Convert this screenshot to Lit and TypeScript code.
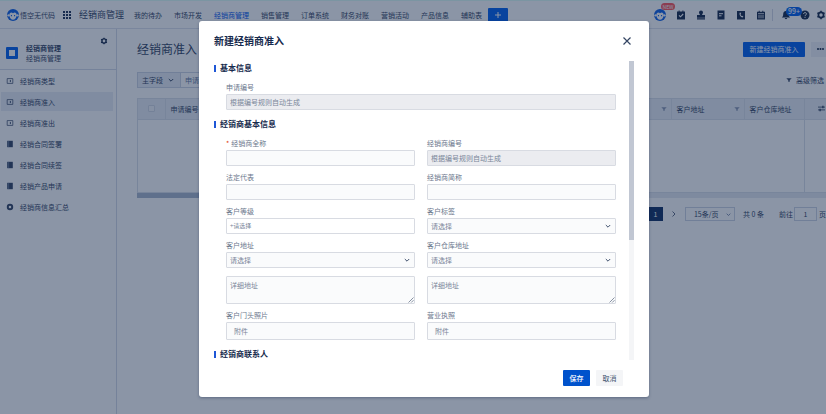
import { LitElement, html, css, svg, nothing } from "lit";
import { customElement } from "lit/decorators.js";
import { classMap } from "lit/directives/class-map.js";

const reset = css`
  * { box-sizing: border-box; }
  button, input, select, textarea {
    font: inherit; color: inherit; margin: 0; padding: 0;
    border: 0; border-radius: 0; background: none; min-width: 0; outline: none;
  }
  select, input { appearance: none; }
  button { display: inline-flex; align-items: center; justify-content: center; white-space: nowrap; }
  a { color: inherit; text-decoration: none; }
  svg { display: block; flex: none; }
`;

const chevron = (size = 6) => html`<svg class="chev" width=${size} height=${size} viewBox="0 0 6 6" fill="none" stroke="currentColor"><path d="M.8 2 3 4.2 5.2 2"/></svg>`;

type Kind = "text" | "auto" | "plus" | "select" | "file";
interface Field { id: string; label: string; kind: Kind; required?: boolean; detail?: boolean; }

const mainFields: Field[] = [
  { id: "fullname", label: "经销商全称", kind: "text", required: true },
  { id: "code", label: "经销商编号", kind: "auto" },
  { id: "legal", label: "法定代表", kind: "text" },
  { id: "short", label: "经销商简称", kind: "text" },
  { id: "level", label: "客户等级", kind: "plus" },
  { id: "tag", label: "客户标签", kind: "select" },
  { id: "address", label: "客户地址", kind: "select", detail: true },
  { id: "depot", label: "客户仓库地址", kind: "select", detail: true },
  { id: "photo", label: "客户门头照片", kind: "file" },
  { id: "licence", label: "营业执照", kind: "file" },
];

@customElement("dealer-dialog")
export class DealerDialog extends LitElement {
  static styles = [reset, css`
    :host {
      display: flex; flex-direction: column; width: 450px; max-width: 100%;
      background: #fff; border-radius: 3px; color: #6b778c;
      box-shadow: 0 1px 3px rgba(9, 30, 66, .35);
      font-size: 7px; line-height: 10px;
    }
    .head { display: flex; align-items: center; justify-content: space-between; height: 40px; padding: 0 17px 0 15px; }
    .title { margin: 0; font-size: 10px; line-height: 14px; font-weight: 700; color: #172b4d; }
    .close { width: 10px; height: 10px; color: #344563; }
    .body { display: flex; padding: 0 15px; height: calc(100vh - 115px); }
    .scroll { flex: 1; min-width: 0; overflow-y: auto; scrollbar-width: none; padding-right: 13px; }
    .rail { width: 5px; background: #f4f5f7; }
    .thumb { height: 60%; background: #c1c7d3; }
    .section { display: flex; align-items: center; gap: 4px; margin: 0; height: 14px; font-size: 8px; font-weight: 700; color: #172b4d; }
    .section::before { content: ""; width: 2px; height: 7px; background: #1f57d6; }
    .grid { display: grid; grid-template-columns: 1fr 1fr; gap: 6px 12px; padding: 7px 0 7px 12px; }
    .field { display: flex; flex-direction: column; gap: 2px; min-width: 0; }
    .wide { grid-column: 1 / -1; }
    .star { color: #de350b; margin-right: 2px; }
    .box {
      width: 100%; height: 16px; padding: 0 3px; border: 1px solid #d8dbe2;
      border-radius: 1px; background: #fafbfc; color: #7a8699; text-align: left;
    }
    .box::placeholder { color: #7a8699; opacity: 1; }
    .auto { background: #ebecf0; }
    .plus { display: flex; justify-content: flex-start; background: #fff; font-size: 6px; }
    .file { display: flex; justify-content: flex-start; height: 18px; padding: 0 7px; }
    .wrap { position: relative; }
    .wrap .chev { position: absolute; right: 5px; top: 5px; color: #42526e; pointer-events: none; }
    .select { display: block; }
    .area { display: block; height: 28px; padding: 3px; resize: none; }
    .more { margin-top: 6px; }
    .grip { position: absolute; right: 1px; bottom: 1px; color: #6b778c; pointer-events: none; }
    .foot { display: flex; justify-content: flex-end; gap: 6px; padding: 10px 26px 11px; }
    .btn { width: 27px; height: 16px; border-radius: 1px; background: #f4f5f7; color: #42526e; }
    .save { background: #0052cc; color: #fff; font-weight: 500; }
  `];

  private control(f: Field) {
    switch (f.kind) {
      case "text": return html`<input id=${f.id} class="box" type="text">`;
      case "auto": return html`<input id=${f.id} class="box auto" type="text" placeholder="根据编号规则自动生成" disabled>`;
      case "plus": return html`<button id=${f.id} class="box plus" type="button">+请选择</button>`;
      case "file": return html`<button id=${f.id} class="box file" type="button">附件</button>`;
      case "select": return html`<div class="wrap"><select id=${f.id} class="box select"><option>请选择</option></select>${chevron()}</div>`;
    }
  }

  private field(f: Field, wide = false) {
    return html`<div class=${classMap({ field: true, wide })}>
      <label for=${f.id}>${f.required ? html`<span class="star">*</span>` : nothing}${f.label}</label>
      ${this.control(f)}
      ${f.detail ? html`<div class="wrap more">
        <textarea class="box area" placeholder="详细地址" aria-label="详细地址"></textarea>
        <svg class="grip" width="6" height="6" viewBox="0 0 6 6" stroke="currentColor" stroke-width=".8"><path d="M.5 5.5l5-5M3.2 5.5l2.3-2.3"/></svg>
      </div>` : nothing}
    </div>`;
  }

  render() {
    return html`
      <header class="head">
        <h2 class="title">新建经销商准入</h2>
        <button class="close" aria-label="关闭"><svg width="10" height="10" viewBox="0 0 10 10" stroke="currentColor" stroke-width="1.2"><path d="M1.5 1.5l7 7M8.5 1.5l-7 7"/></svg></button>
      </header>
      <div class="body">
        <div class="scroll">
          <h3 class="section">基本信息</h3>
          <div class="grid">${this.field({ id: "apply", label: "申请编号", kind: "auto" }, true)}</div>
          <h3 class="section">经销商基本信息</h3>
          <div class="grid">${mainFields.map((f) => this.field(f))}</div>
          <h3 class="section">经销商联系人</h3>
        </div>
        <div class="rail"><div class="thumb"></div></div>
      </div>
      <footer class="foot">
        <button class="btn save">保存</button>
        <button class="btn">取消</button>
      </footer>`;
  }
}

const icon = (body: unknown, size = 10) => html`<svg width=${size} height=${size} viewBox="0 0 10 10" fill="currentColor">${body}</svg>`;

const glyph = {
  task: svg`<path d="M1 1.500h1.600V.5h1v1h2.800v-1h1v1H9V9.500H1z"/><path d="M3 5.300l1.500 1.500L7.200 4" fill="none" stroke="#fff" stroke-width="1.100"/>`,
  stamp: svg`<path d="M5 .5a2 2 0 0 1 2 2c0 1-.9 1.500-.9 2.600H9v2.600H1V5.100h2.900C3.900 4 3 3.500 3 2.500a2 2 0 0 1 2-2zM1 8.200h8v1.200H1z"/>`,
  note: svg`<path d="M1.500.5h7v9h-7z"/><path d="M3 3.700h4M3 5.800h2.500" stroke="#fff" stroke-width="1"/>`,
  phone: svg`<path d="M1 1h8v8.500H1z"/><path d="M3.600 2.700c-.6 1.800.9 4.300 3 4.900l.8-1-1.300-.9-.6.400c-.5-.4-.9-1-1-1.500l.6-.5-.5-1.500z" fill="#fff"/>`,
  calendar: svg`<path d="M1 1.800h1.700v-1h1v1h2.600v-1h1v1H9v7.700H1z"/><path d="M2 3.700h6M3 5v3.300M5 5v3.300M7 5v3.300" stroke="#fff" stroke-width=".8"/>`,
  bell: svg`<path d="M5 1c2 0 2.800 1.500 2.800 3.200 0 1.600.5 2.500 1.400 3.200H.8c.9-.7 1.400-1.600 1.400-3.200C2.200 2.500 3 1 5 1zM3.800 8h2.400c0 1.500-2.400 1.500-2.400 0z"/>`,
  help: svg`<circle cx="5" cy="5" r="4.500"/><path d="M3.600 4c0-2 2.900-1.800 2.900-.1C6.500 5 5 5 5 6M5 6.800v1.100" fill="none" stroke="#fff"/>`,
  gear: svg`<circle cx="5" cy="5" r="2.600" fill="none" stroke="currentColor" stroke-width="1.700"/><path d="M5 .8v1.700M5 7.500v1.700M1.400 2.900l1.400.8M7.200 6.300l1.400.8M1.400 7.100l1.400-.8M7.200 3.700l1.400-.8" stroke="currentColor" stroke-width="1.500"/>`,
  form: svg`<path d="M1.500 2h7v6h-7z" fill="none" stroke="currentColor" stroke-width=".9"/><path d="M6.200 3.500v3L4.200 5z"/>`,
  book: svg`<path d="M1.500 1h7v8h-7z"/><path d="M3.300 1v8" stroke="#9fb0cc" stroke-width=".6"/>`,
  report: svg`<circle cx="5" cy="5" r="2.800" fill="none" stroke="currentColor" stroke-width="2.400"/>`,
  funnel: svg`<path d="M.5 2h9L6.200 5.500V8H3.800V5.500z"/>`,
  sliders: svg`<path d="M0 3h10M0 7h10" stroke="currentColor" stroke-width="1.200"/><path d="M6 1.200h2v3.600H6zM2 5.200h2v3.600H2z"/>`,
};

const monkey = svg`<circle cx="5" cy="5" r="5" fill="#1464e8"/><circle cx="1.300" cy="5.300" r="1" fill="#fff"/><circle cx="8.700" cy="5.300" r="1" fill="#fff"/><path d="M5 3.500c1.500-1.300 3.200-.2 3 1.700C8 7.400 6.500 9 5 9S2 7.400 2 5.200c-.2-1.900 1.500-3 3-1.700z" fill="#fff"/><path d="M3.700 5v1M6.300 5v1" stroke="#1464e8" stroke-width=".9"/>`;

const tabs = ["我的待办", "市场开发", "经销商管理", "销售管理", "订单系统", "财务对账", "营销活动", "产品信息", "辅助表"];
const menu = [
  { text: "经销商类型", art: glyph.form },
  { text: "经销商准入", art: glyph.form },
  { text: "经销商准出", art: glyph.form },
  { text: "经销合同签署", art: glyph.book },
  { text: "经销合同续签", art: glyph.book },
  { text: "经销产品申请", art: glyph.book },
  { text: "经销商信息汇总", art: glyph.report },
];

@customElement("app-root")
export class AppRoot extends LitElement {
  static styles = [reset, css`
    :host {
      display: block; position: relative; min-height: 100vh; overflow: hidden;
      font-family: "Noto Sans CJK SC", "Liberation Sans", sans-serif;
      font-size: 7px; line-height: 10px; color: #3a4a68; background: #fff;
    }
    .page { display: grid; grid-template-columns: 117px minmax(0, 1fr); grid-template-rows: 29px 1fr; min-height: 100vh; }
    .top { grid-column: 1 / -1; display: flex; align-items: center; min-width: 0; border-top: 1px solid #e0fff8; border-bottom: 1px solid #dfe3ee; padding-left: 7px; white-space: nowrap; }
    .brand { display: flex; align-items: center; gap: 1px; }
    .apps { margin: 0 8px; color: #24385c; }
    .product { font-size: 9px; line-height: 12px; margin-right: 10px; }
    .tabs { display: flex; gap: 12px; }
    .tab.on { color: #0a5cf0; }
    .add { width: 20px; height: 14px; margin-left: 6px; border-radius: 1px; background: #0864f0; color: #fff; }
    .tools { display: flex; align-items: center; gap: 6px; margin-left: auto; color: #1e3050; }
    .quick { display: flex; align-items: center; gap: 10px; }
    .bot, .alert { position: relative; }
    .new, .count { position: absolute; color: #fff; border-radius: 5px; text-align: center; }
    .new { left: 7px; top: -6px; width: 14px; height: 7px; font-size: 5px; line-height: 7px; background: #ff5a5f; }
    .count { left: 5px; top: -3px; width: 16px; height: 9px; line-height: 9px; background: #0864f0; font-weight: 500; }
    .sep { width: 1px; height: 12px; background: #d5dae6; }
    .alert { margin: 0 3px 0 2px; }

    .side { border-right: 1px solid #d6dbe8; }
    .app { display: flex; align-items: flex-start; gap: 8px; height: 41px; padding: 8px 8px 0 6px; border-bottom: 1px solid #d6dbe8; }
    .tile { display: grid; place-items: center; width: 12px; height: 12px; margin-top: 10px; border-radius: 1px; background: #0864f0; }
    .tile::before { content: ""; width: 6px; height: 6px; background: #fff; }
    .names { flex: 1; padding-top: 6px; }
    .name { font-weight: 700; }
    .cog { color: #1e3050; }
    .list { margin: 0; padding: 0 3px 0 1px; list-style: none; }
    .item { display: flex; height: 21px; padding: 1px 0; }
    .item a { display: flex; align-items: center; gap: 6px; flex: 1; height: 19px; padding-left: 5px; }
    .on a { background: #ebeff5; }

    .main { min-width: 0; padding: 12px 0 0 20px; }
    .bar { display: flex; align-items: center; justify-content: space-between; height: 16px; }
    .h1 { margin: 0; font-size: 12px; line-height: 16px; font-weight: 400; }
    .actions { display: flex; gap: 6px; }
    .create { width: 62px; height: 15px; border-radius: 1px; background: #0864f0; color: #fff; }
    .dots { width: 15px; height: 15px; padding-left: 3px; background: #f0f2f7; color: #1e3050; }
    .filter { display: flex; justify-content: space-between; align-items: center; margin-top: 15px; height: 16px; }
    .search { display: flex; border: 1px solid #cfd6e4; }
    .by { position: relative; display: flex; align-items: center; background: #ebeff5; border-right: 1px solid #cfd6e4; }
    .by .chev { position: absolute; right: 6px; pointer-events: none; }
    .by select { width: 42px; height: 14px; padding-left: 4px; }
    .term { width: 110px; height: 14px; padding: 0 4px; }
    .term::placeholder { color: #6b7ea3; opacity: 1; }
    .adv { gap: 4px; margin-right: 2px; }
    .tablebox { margin-top: 10px; border: 1px solid #dbe0ea; border-right: 0; height: 95px; }
    table { width: 100%; height: 100%; table-layout: fixed; border-collapse: collapse; }
    th { height: 20px; padding: 0 4px 0 5px; text-align: left; font-weight: 400; background: #ebeff5; border-right: 1px solid #dbe0ea; border-bottom: 1px solid #dbe0ea; white-space: nowrap; }
    td { padding: 0; }
    .last { border-left: 1px solid #dbe0ea; border-right: 0; }
    .c0 { width: 27px; } .c3 { width: 73px; } .c4 { width: 60px; } .c5 { width: 22px; } .c2 { width: 67px; }
    .cell { display: flex; align-items: center; justify-content: space-between; }
    .cell svg { color: #8d9ab5; }
    .c5 .cell { justify-content: flex-end; }
    .c5 { padding-right: 1px; }
    .c5 svg { color: #3a4a68; }
    .check { display: block; width: 7px; height: 7px; margin: 0 auto; border: 1px solid #d3d9e5; border-radius: 1px; background: #f4f6fa; }
    .track { height: 5px; background: #e6eaf2; }
    .slide { width: 55%; height: 5px; background: #adb9ce; }
    .pager { display: flex; justify-content: flex-end; align-items: center; height: 14px; margin-top: 9px; white-space: nowrap; }
    .cur { width: 15px; height: 14px; background: #173668; color: #fff; }
    .next { width: 22px; }
    .size { position: relative; display: flex; align-items: center; width: 50px; height: 14px; border: 1px solid #cfd6e4; }
    .size select { width: 100%; padding-left: 8px; }
    .size .chev { position: absolute; right: 3px; color: #6b7ea3; pointer-events: none; }
    .total { margin: 0 15px 0 8px; }
    .go { display: flex; align-items: center; gap: 1px; }
    .go input { width: 23px; height: 14px; border: 1px solid #cfd6e4; text-align: center; margin-right: 1px; }

    .veil { position: absolute; inset: 0; display: flex; justify-content: center; align-items: flex-start; padding: 21px 0 17px 22px; background: rgba(9, 30, 66, .47); }
  `];

  render() {
    return html`
      <div class="page">
        <header class="top">
          <a class="brand" href="#">${icon(monkey, 12)}<span>悟空无代码</span></a>
          <svg class="apps" width="8" height="8" viewBox="0 0 8 8" fill="currentColor"><path d="M0 0h2v2H0zM3 0h2v2H3zM6 0h2v2H6zM0 3h2v2H0zM3 3h2v2H3zM6 3h2v2H6zM0 6h2v2H0zM3 6h2v2H3zM6 6h2v2H6z"/></svg>
          <span class="product">经销商管理</span>
          <nav class="tabs">${tabs.map((t, i) => html`<a href="#" class=${classMap({ tab: true, on: i === 2 })}>${t}</a>`)}</nav>
          <button class="add" aria-label="新增"><svg width="6" height="6" viewBox="0 0 6 6" stroke="currentColor"><path d="M3 0v6M0 3h6"/></svg></button>
          <div class="tools">
            <div class="quick">
              <span class="bot">${icon(monkey, 12)}<span class="new">NEW</span></span>
              ${[glyph.task, glyph.stamp, glyph.note, glyph.phone, glyph.calendar].map((g) => icon(g))}
            </div>
            <span class="sep"></span>
            <span class="alert">${icon(glyph.bell)}<span class="count">99+</span></span>
            ${icon(glyph.help)}
            ${icon(glyph.gear)}
          </div>
        </header>
        <aside class="side">
          <div class="app">
            <span class="tile"></span>
            <div class="names"><div class="name">经销商管理</div><div>经销商管理</div></div>
            <span class="cog">${icon(glyph.gear, 8)}</span>
          </div>
          <ul class="list">${menu.map((m, i) => html`<li class=${classMap({ item: true, on: i === 1 })}><a href="#">${icon(m.art, 8)}${m.text}</a></li>`)}</ul>
        </aside>
        <main class="main">
          <div class="bar">
            <h1 class="h1">经销商准入</h1>
            <div class="actions">
              <button class="create">新建经销商准入</button>
              <button class="dots" aria-label="更多"><svg width="7" height="2" viewBox="0 0 7 2" fill="currentColor"><circle cx="1" cy="1" r="1"/><circle cx="3.500" cy="1" r="1"/><circle cx="6" cy="1" r="1"/></svg></button>
            </div>
          </div>
          <div class="filter">
            <div class="search">
              <div class="by"><select aria-label="字段"><option>主字段</option></select>${chevron()}</div>
              <input class="term" placeholder="申请编号" aria-label="申请编号">
            </div>
            <button class="adv">${icon(glyph.funnel, 6)}高级筛选</button>
          </div>
          <div class="tablebox">
            <table>
              <thead><tr>
                <th class="c0"><input class="check" type="checkbox" aria-label="全选"></th>
                <th>申请编号</th>
                <th class="c2"><div class="cell"><span></span>${icon(glyph.funnel, 6)}</div></th>
                <th class="c3"><div class="cell">客户地址${icon(glyph.funnel, 6)}</div></th>
                <th class="c4">客户仓库地址</th>
                <th class="c5 last"><div class="cell">${icon(glyph.sliders, 7)}</div></th>
              </tr></thead>
              <tbody><tr><td colspan="5"></td><td class="last"></td></tr></tbody>
            </table>
          </div>
          <div class="track"><div class="slide"></div></div>
          <div class="pager">
            <button class="cur">1</button>
            <button class="next" aria-label="下一页"><svg width="5" height="6" viewBox="0 0 5 6" fill="none" stroke="currentColor" stroke-width=".8"><path d="M1.500.5 4 3 1.500 5.500"/></svg></button>
            <div class="size"><select aria-label="每页条数"><option>15条/页</option></select>${chevron(5)}</div>
            <span class="total">共 0 条</span>
            <label class="go">前往<input type="text" value="1">页</label>
          </div>
        </main>
      </div>
      <div class="veil"><dealer-dialog role="dialog" aria-label="新建经销商准入"></dealer-dialog></div>`;
  }
}
